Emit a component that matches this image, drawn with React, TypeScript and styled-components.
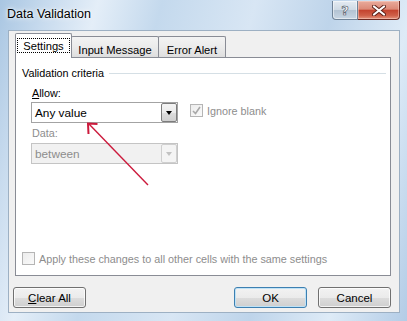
import React from "react";
import styled, { createGlobalStyle } from "styled-components";

const GlobalStyle = createGlobalStyle`
  html, body {
    margin: 0;
    padding: 0;
  }
  body {
    font-family: "Liberation Sans", Arial, sans-serif;
    font-size: 10.8px;
    color: #000;
  }
`;

// ---------------- window frame ----------------
const Window = styled.div`
  position: relative;
  width: 407px;
  height: 321px;
  box-sizing: border-box;
  display: flex;
  flex-direction: column;
  overflow: hidden;
  background: linear-gradient(
    105deg,
    #a9c6e2 0%,
    #c8dbee 10%,
    #e4eef8 20%,
    #c4d9ed 33%,
    #d8e6f4 52%,
    #bed4ea 68%,
    #deebf7 84%,
    #b3cce6 100%
  );
`;

const TitleBar = styled.div`
  height: 30px;
  flex-shrink: 0;
  display: flex;
  align-items: flex-start;
  padding-left: 7px;
`;

const Title = styled.div`
  margin-top: 7px;
  font-size: 12.5px;
  line-height: 15px;
  color: #000;
  text-shadow: 0 0 6px rgba(255, 255, 255, 0.95), 0 0 3px #fff;
`;

const CaptionGroup = styled.div`
  margin-left: auto;
  margin-right: 7px;
  margin-top: 1px;
  display: flex;
  height: 19px;
`;

const HelpButton = styled.div`
  width: 26px;
  height: 19px;
  box-sizing: border-box;
  border: 1px solid #6f8398;
  border-top: none;
  border-radius: 0 0 0 4px;
  background: linear-gradient(#e4ebf2 0%, #cfdae5 48%, #b3c3d3 52%, #c8d6e4 100%);
  box-shadow: inset 0 0 0 1px rgba(255, 255, 255, 0.5);
  display: flex;
  align-items: center;
  justify-content: center;
  font-family: "DejaVu Sans", sans-serif;
  font-weight: bold;
  font-size: 13px;
  color: #f6f8fa;
  -webkit-text-stroke: 0.6px #4a5560;
`;

const CloseButton = styled.div`
  width: 42px;
  height: 19px;
  box-sizing: border-box;
  border: 1px solid #6e2a22;
  border-top: none;
  border-left: none;
  border-radius: 0 0 4px 0;
  background: linear-gradient(#e9ab9c 0%, #dc8a78 45%, #c4442f 52%, #cf5f48 80%, #e4937c 100%);
  box-shadow: inset 0 0 0 1px rgba(255, 220, 210, 0.45);
  display: flex;
  align-items: center;
  justify-content: center;
`;

// ---------------- client area ----------------
const Client = styled.div`
  flex: 1;
  margin: 0 7px 8px 8px;
  box-sizing: border-box;
  border: 1px solid #9db0c3;
  background: #f0f0f0;
  display: flex;
  flex-direction: column;
  padding-top: 2px;
`;

const TabStrip = styled.div`
  display: flex;
  align-items: flex-end;
  height: 24px;
  margin-left: 6px;
  position: relative;
  z-index: 1;
`;

const Tab = styled.div<{ $active?: boolean; $w: number }>`
  width: ${(p) => p.$w}px;
  height: ${(p) => (p.$active ? 25 : 21)}px;
  margin-bottom: ${(p) => (p.$active ? -1 : 0)}px;
  margin-left: ${(p) => (p.$active ? 0 : -1)}px;
  box-sizing: border-box;
  border: 1px solid #898c95;
  border-bottom: none;
  border-radius: 2px 2px 0 0;
  background: ${(p) =>
    p.$active ? "#fff" : "linear-gradient(#f3f3f3 0%, #ebebeb 50%, #dedede 100%)"};
  display: flex;
  justify-content: center;
  align-items: flex-start;
  padding-top: ${(p) => (p.$active ? 4 : 3)}px;
  position: relative;
  z-index: ${(p) => (p.$active ? 2 : 1)};
  font-size: 11.2px;
  &:first-child {
    margin-left: 0;
  }
`;

const FocusLabel = styled.span`
  width: 53px;
  height: 15px;
  box-sizing: border-box;
  border: 1px dotted #000;
  display: flex;
  align-items: center;
  justify-content: center;
`;

const TabLabel = styled.span`
  height: 15px;
  display: flex;
  align-items: center;
  padding-top: 2px;
`;

const Pane = styled.div`
  width: 376px;
  height: 219px;
  margin-left: 6px;
  box-sizing: border-box;
  border: 1px solid #898c95;
  background: #fff;
  display: flex;
  flex-direction: column;
`;

const GroupHeader = styled.div`
  display: flex;
  align-items: center;
  height: 14px;
  margin: 8px 4px 0 6px;
`;

const GroupLine = styled.div`
  flex: 1;
  height: 1px;
  margin-left: 5px;
  background: #d5dfe5;
`;

const Fields = styled.div`
  display: flex;
  flex-direction: column;
  padding-left: 15px;
`;

const Label = styled.div<{ $disabled?: boolean; $gap: number }>`
  height: 14px;
  line-height: 14px;
  padding-left: 1px;
  margin-top: ${(p) => p.$gap}px;
  margin-bottom: ${(p) => (p.$disabled ? 3 : 2)}px;
  color: ${(p) => (p.$disabled ? "#8d8d8d" : "#000")};
`;

const Row = styled.div`
  display: flex;
  align-items: flex-start;
`;

const Combo = styled.div<{ $disabled?: boolean }>`
  width: 147px;
  height: 21px;
  box-sizing: border-box;
  display: flex;
  align-items: stretch;
  border: 1px solid ${(p) => (p.$disabled ? "#c4c4c4" : "#a3a3a3")};
  background: ${(p) => (p.$disabled ? "#f1f1f1" : "#fff")};
`;

const ComboText = styled.div<{ $disabled?: boolean }>`
  flex: 1;
  display: flex;
  align-items: center;
  padding-left: 3px;
  color: ${(p) => (p.$disabled ? "#8d8d8d" : "#000")};
  font-size: 11.8px;
`;

const DropButton = styled.div<{ $disabled?: boolean }>`
  width: 16px;
  box-sizing: border-box;
  border: 1px solid ${(p) => (p.$disabled ? "#cfcfcf" : "#7c7c7c")};
  border-radius: 2px;
  background: ${(p) =>
    p.$disabled
      ? "#f4f4f4"
      : "linear-gradient(#f4f4f4 0%, #ebebeb 50%, #dddddd 51%, #cfcfcf 100%)"};
  display: flex;
  align-items: center;
  justify-content: center;
  &::after {
    content: "";
    border-left: 3.5px solid transparent;
    border-right: 3.5px solid transparent;
    border-top: 4px solid ${(p) => (p.$disabled ? "#c2c2c2" : "#000")};
    margin-top: 1px;
  }
`;

const CheckRow = styled.div<{ $ml: number; $mt: number }>`
  display: flex;
  align-items: center;
  margin-left: ${(p) => p.$ml}px;
  margin-top: ${(p) => p.$mt}px;
  gap: 4px;
  color: #8d8d8d;
`;

const Box = styled.span`
  width: 13px;
  height: 13px;
  box-sizing: border-box;
  border: 1px solid #b5b5b5;
  background: linear-gradient(135deg, #ececec 0%, #fafafa 100%);
  display: flex;
  align-items: center;
  justify-content: center;
`;

const ApplyRow = styled(CheckRow)`
  margin-top: auto;
  margin-bottom: 10px;
`;

// ---------------- footer ----------------
const Footer = styled.div`
  display: flex;
  align-items: center;
  margin-top: 11px;
  padding: 0 8px 0 4px;
  gap: 11px;
`;

const Spacer = styled.div`
  flex: 1;
`;

const Button = styled.button<{ $default?: boolean }>`
  width: 73px;
  height: 21px;
  box-sizing: border-box;
  padding: 0;
  border: 1px solid ${(p) => (p.$default ? "#3c7fb1" : "#707070")};
  border-radius: 3px;
  background: linear-gradient(#f2f2f2 0%, #ebebeb 50%, #dddddd 51%, #cfcfcf 100%);
  box-shadow: inset 0 0 0 1px ${(p) => (p.$default ? "#bfe2f6" : "rgba(255,255,255,0.75)")};
  font-family: "Liberation Sans", Arial, sans-serif;
  font-size: 11.5px;
  color: #000;
`;

const Overlay = styled.svg`
  position: absolute;
  left: 0;
  top: 0;
  pointer-events: none;
`;

function Check() {
  return (
    <svg width="9" height="9" viewBox="0 0 9 9">
      <path d="M1 5 L3.5 7.5 L8 1" fill="none" stroke="#a8a8a8" strokeWidth="1.6" />
    </svg>
  );
}

export default function App() {
  return (
    <>
      <GlobalStyle />
      <Window>
        <TitleBar>
          <Title>Data Validation</Title>
          <CaptionGroup>
            <HelpButton>?</HelpButton>
            <CloseButton>
              <svg width="14" height="11" viewBox="0 0 14 11">
                <path d="M2 1.5 L12 9.5 M12 1.5 L2 9.5" stroke="#5a2018" strokeWidth="4" strokeLinecap="round" />
                <path d="M2 1.5 L12 9.5 M12 1.5 L2 9.5" stroke="#fff" strokeWidth="2.2" strokeLinecap="round" />
              </svg>
            </CloseButton>
          </CaptionGroup>
        </TitleBar>

        <Client>
          <TabStrip>
            <Tab $active $w={57}>
              <FocusLabel>Settings</FocusLabel>
            </Tab>
            <Tab $w={88}>
              <TabLabel>Input Message</TabLabel>
            </Tab>
            <Tab $w={68}>
              <TabLabel>Error Alert</TabLabel>
            </Tab>
          </TabStrip>

          <Pane>
            <GroupHeader>
              Validation criteria
              <GroupLine />
            </GroupHeader>
            <Fields>
              <Label $gap={6}>
                <u>A</u>llow:
              </Label>
              <Row>
                <Combo>
                  <ComboText>Any value</ComboText>
                  <DropButton />
                </Combo>
                <CheckRow $ml={12} $mt={2}>
                  <Box>
                    <Check />
                  </Box>
                  Ignore blank
                </CheckRow>
              </Row>
              <Label $gap={3} $disabled>
                Data:
              </Label>
              <Row>
                <Combo $disabled>
                  <ComboText $disabled>between</ComboText>
                  <DropButton $disabled />
                </Combo>
              </Row>
            </Fields>
            <ApplyRow $ml={6} $mt={0}>
              <Box />
              Apply these changes to all other cells with the same settings
            </ApplyRow>
          </Pane>

          <Footer>
            <Button>
              <u>C</u>lear All
            </Button>
            <Spacer />
            <Button $default>OK</Button>
            <Button>Cancel</Button>
          </Footer>
        </Client>

        <Overlay width="407" height="321" viewBox="0 0 407 321">
          <path d="M148 185 L88.5 123.5" stroke="#cc1a3c" strokeWidth="1.4" fill="none" />
          <path d="M97.5 124 L88 123.5 L88.5 134" stroke="#cc1a3c" strokeWidth="2" fill="none" />
        </Overlay>
      </Window>
    </>
  );
}
